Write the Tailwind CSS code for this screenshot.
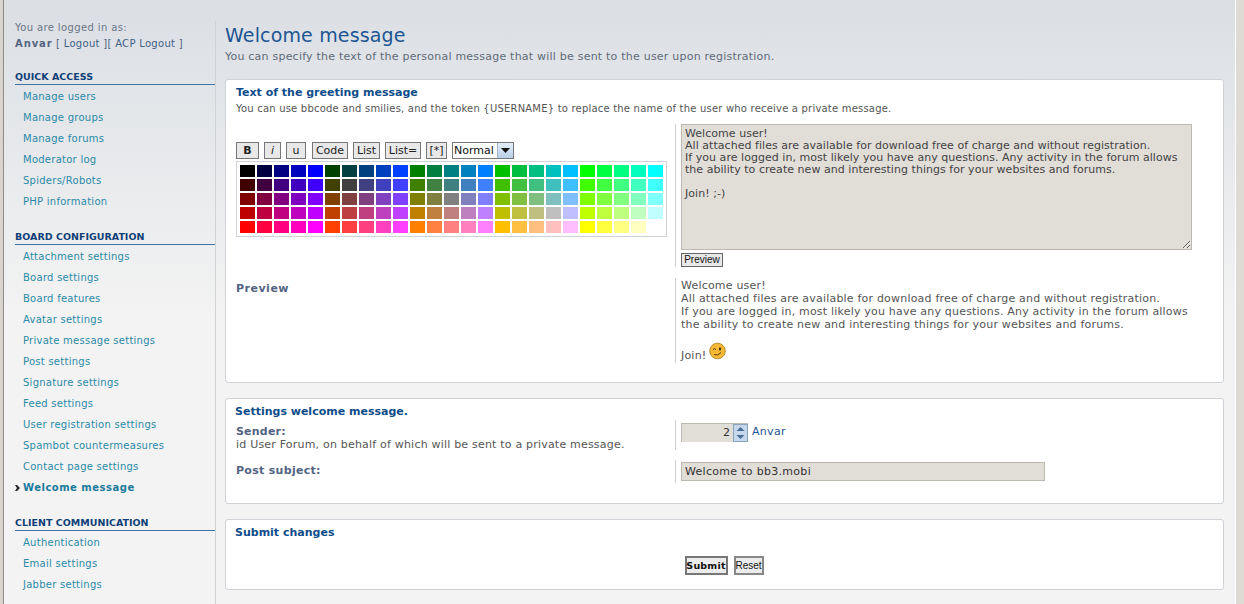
<!DOCTYPE html>
<html lang="en">
<head>
  <meta charset="UTF-8">
  <title>Welcome message</title>
  <script src="https://cdn.jsdelivr.net/npm/@tailwindcss/browser@4"></script>
  <script>
    document.addEventListener("DOMContentLoaded", () => {
      const levels = ["00", "40", "80", "BF", "FF"];
      const palette = document.getElementById("palette");
      levels.forEach((r) => {
        levels.forEach((g) => {
          levels.forEach((b) => {
            const cell = document.createElement("div");
            cell.className = "w-[15px] h-[12px]";
            cell.style.backgroundColor = `#${r}${g}${b}`;
            palette.appendChild(cell);
          });
        });
      });
    });
  </script>
</head>
<body class="h-[604px] overflow-hidden bg-[#f3f3f3] font-['DejaVu_Sans','Liberation_Sans',sans-serif] text-[11px] leading-[14px] text-[#536482]">
  <div class="flex h-[604px]">
    <div class="w-[4px] shrink-0 bg-[#d9d5ce] border-r border-[#8f8b85]"></div>

    <div class="w-[1231px] shrink-0 flex bg-gradient-to-b from-[#dbdfe4] to-[#f3f3f3] to-[52%]">
      <!-- Menu -->
      <aside class="w-[201px] shrink-0 ml-[11px] mt-[21px] border-r border-[#cfd3d6] -mr-[1px]">
        <p class="text-[10px] text-[#6a7686] tracking-[0.38px] h-[16px]">You are logged in as:</p>
        <p class="text-[10px] text-[#536482] tracking-[0.3px] h-[15px]"><b class="tracking-[0.9px]">Anvar</b> [ <a class="text-[#3f6185]">Logout</a> ][ <a class="text-[#3f6185]">ACP Logout</a> ]</p>

        <h3 class="mt-[18px] h-[14px] border-b border-[#3f75a5] box-content text-[9.5px] font-bold text-[#0f3f78] leading-[14px] mb-[1px]">QUICK ACCESS</h3>
        <ul class="pl-[8px] text-[10px] text-[#2a8aa8] tracking-[0.26px] leading-[21px]">
          <li>Manage users</li>
          <li>Manage groups</li>
          <li>Manage forums</li>
          <li>Moderator log</li>
          <li>Spiders/Robots</li>
          <li>PHP information</li>
        </ul>

        <h3 class="mt-[18px] h-[14px] border-b border-[#3f75a5] box-content text-[9.5px] font-bold text-[#0f3f78] leading-[14px] mb-[1px]">BOARD CONFIGURATION</h3>
        <ul class="pl-[8px] text-[10px] text-[#2a8aa8] tracking-[0.26px] leading-[21px]">
          <li>Attachment settings</li>
          <li>Board settings</li>
          <li>Board features</li>
          <li>Avatar settings</li>
          <li>Private message settings</li>
          <li>Post settings</li>
          <li>Signature settings</li>
          <li>Feed settings</li>
          <li>User registration settings</li>
          <li>Spambot countermeasures</li>
          <li>Contact page settings</li>
          <li class="relative font-bold text-[#1c7a9c] tracking-[0.5px]">
            <svg class="absolute -left-[8px] top-[8px]" width="5" height="6" viewBox="0 0 5 6"><path d="M0 0h2l3 3-3 3H0l2-3z" fill="#222"/></svg>
            Welcome message
          </li>
        </ul>

        <h3 class="mt-[18px] h-[14px] border-b border-[#3f75a5] box-content text-[9.5px] font-bold text-[#0f3f78] leading-[14px] mb-[1px]">CLIENT COMMUNICATION</h3>
        <ul class="pl-[8px] text-[10px] text-[#2a8aa8] tracking-[0.26px] leading-[21px]">
          <li>Authentication</li>
          <li>Email settings</li>
          <li>Jabber settings</li>
        </ul>
      </aside>

      <!-- Content -->
      <main class="w-[999px] shrink-0 ml-[10px] pt-[21px]">
        <h1 class="text-[19px] leading-[28px] text-[#1c5593] tracking-[0.15px]">Welcome message</h1>
        <p class="text-[#5f6b78] tracking-[0.22px] mt-[1px] h-[15px] leading-[14px]">You can specify the text of the personal message that will be sent to the user upon registration.</p>

        <section class="mt-[14px] h-[304px] bg-white border border-[#cfd2d6] rounded-[3px] pl-[10px] pt-[5px]">
          <h2 class="text-[11px] leading-[16px] font-bold text-[#0f4d8a]">Text of the greeting message</h2>
          <p class="mt-[1px] h-[15px] text-[10px] tracking-[0.2px] text-[#555]">You can use bbcode and smilies, and the token {USERNAME} to replace the name of the user who receive a private message.</p>

          <div class="flex mt-[7px]">
            <div class="w-[439px] shrink-0 pt-[18px]">
              <div class="flex items-center text-[#222]">
                <span class="w-[23px] h-[17px] flex items-center justify-center border border-[#777] bg-[#e8e8e8] font-bold mr-[5px]">B</span>
                <span class="w-[17px] h-[17px] flex items-center justify-center border border-[#777] bg-[#e8e8e8] italic mr-[5px]">i</span>
                <span class="w-[20px] h-[17px] flex items-center justify-center border border-[#777] bg-[#e8e8e8] mr-[6px]">u</span>
                <span class="w-[36px] h-[17px] flex items-center justify-center border border-[#777] bg-[#e8e8e8] mr-[5px]">Code</span>
                <span class="w-[27px] h-[17px] flex items-center justify-center border border-[#777] bg-[#e8e8e8] mr-[5px]">List</span>
                <span class="w-[36px] h-[17px] flex items-center justify-center border border-[#777] bg-[#e8e8e8] mr-[5px]">List=</span>
                <span class="w-[21px] h-[17px] flex items-center justify-center border border-[#777] bg-[#e8e8e8] mr-[5px]">[*]</span>
                <span class="w-[62px] h-[17px] flex items-center justify-between border border-[#777] bg-white pl-[1px] text-[#111]">
                  Normal
                  <span class="w-[16px] h-[15px] flex items-center justify-center bg-gradient-to-b from-[#e4eef8] to-[#b9d0e8] border-l border-[#9db4cc]">
                    <svg width="9" height="5" viewBox="0 0 9 5"><path d="M0 0h9L4.500 5z" fill="#111"/></svg>
                  </span>
                </span>
              </div>
              <div id="palette" class="mt-[2px] w-[431px] h-[76px] border border-[#cfd2d6] pl-[3px] pt-[3px] grid grid-cols-[repeat(25,15px)] grid-rows-[repeat(5,12px)] gap-x-[2px] gap-y-[2px]"></div>
            </div>
            <div class="border-l border-[#cfcfcf] pl-[5px] h-[143px]">
              <textarea class="block w-[511px] h-[126px] border border-[#bdb9b2] bg-[#e1ddd7] px-[3px] py-[3px] text-[11px] leading-[12px] tracking-[0.04px] text-[#444] font-['DejaVu_Sans']">Welcome user!
All attached files are available for download free of charge and without registration.
If you are logged in, most likely you have any questions. Any activity in the forum allows the ability to create new and interesting things for your websites and forums.

Join! ;-)</textarea>
              <span class="mt-[3px] flex w-[42px] h-[14px] items-center justify-center border border-[#666] bg-[#e8e8e8] text-[10px] text-[#111] font-['Liberation_Sans']">Preview</span>
            </div>
          </div>

          <div class="flex mt-[11px]">
            <div class="w-[439px] shrink-0 pt-[4px] font-bold text-[#536482] tracking-[0.5px]">Preview</div>
            <div class="border-l border-[#cfcfcf] pl-[5px] h-[85px] pt-[1px] text-[#555] tracking-[0.2px] leading-[13px]">
              <p>Welcome user!</p>
              <p>All attached files are available for download free of charge and without registration.</p>
              <p>If you are logged in, most likely you have any questions. Any activity in the forum allows</p>
              <p>the ability to create new and interesting things for your websites and forums.</p>
              <p class="mt-[11px] flex items-end gap-[3px] h-[20px]">Join!
                <svg width="17" height="18" viewBox="0 0 17 18" class="mb-[2px]">
                  <circle cx="8.500" cy="9" r="7.800" fill="#f6b935" stroke="#a8761a" stroke-width="0.800"/>
                  <path d="M4 7.500q1.500-1.500 3 0" fill="none" stroke="#5b3a08" stroke-width="1"/>
                  <ellipse cx="11" cy="7" rx="1" ry="1.800" fill="#3b2606"/>
                  <path d="M5 12.500q4 2 7-2" fill="none" stroke="#5b3a08" stroke-width="1"/>
                </svg>
              </p>
            </div>
          </div>
        </section>

        <section class="mt-[15px] h-[106px] bg-white border border-[#cfd2d6] rounded-[3px] pl-[9px] pt-[5px]">
          <h2 class="text-[11px] leading-[16px] font-bold text-[#0f4d8a]">Settings welcome message.</h2>
          <div class="flex h-[36px]">
            <div class="w-[440px] shrink-0 pl-[1px] pt-[5px] text-[#555] tracking-[0.2px]">
              <p class="font-bold text-[#536482] h-[13px] leading-[13px]">Sender:</p>
              <p class="leading-[14px]">id User Forum, on behalf of which will be sent to a private message.</p>
            </div>
            <div class="border-l border-[#cfcfcf] pl-[5px] h-[30px] pt-[3px] flex items-start">
              <span class="w-[67px] h-[19px] flex items-center justify-end bg-[#e1ddd7] border-t border-l border-[#bdb9b2] text-[#333]">2
                <span class="ml-[3px] w-[15px] h-[18px] flex flex-col justify-between bg-[#c5d8ec] border border-[#8aa3bd]">
                  <svg width="13" height="8" viewBox="0 0 13 8"><path d="M2.500 6L6.500 2l4 4z" fill="#4a6f96"/></svg>
                  <svg width="13" height="8" viewBox="0 0 13 8"><path d="M2.500 2l4 4 4-4z" fill="#4a6f96"/></svg>
                </span>
              </span>
              <a class="ml-[4px] text-[#1c5593] tracking-[0.3px] leading-[18px]">Anvar</a>
            </div>
          </div>
          <div class="flex mt-[4px]">
            <div class="w-[440px] shrink-0 pl-[1px] pt-[4px] font-bold text-[#536482] tracking-[0.3px]">Post subject:</div>
            <div class="border-l border-[#cfcfcf] pl-[5px] h-[23px] pt-[2px]">
              <div class="w-[364px] h-[19px] bg-[#e1ddd7] border border-[#bdb9b2] pl-[3px] leading-[17px] tracking-[0.3px] text-[#333]">Welcome to bb3.mobi</div>
            </div>
          </div>
        </section>

        <section class="mt-[15px] h-[71px] bg-white border border-[#cfd2d6] rounded-[3px] pl-[9px] pt-[5px]">
          <h2 class="text-[11px] leading-[15px] font-bold text-[#0f4d8a]">Submit changes</h2>
          <div class="flex justify-center gap-[6px] mt-[16px] pr-[10px]">
            <span class="w-[43px] h-[19px] flex items-center justify-center border-2 border-[#777] bg-[#ececec] text-[9.5px] font-bold text-[#111] tracking-[0.2px]">Submit</span>
            <span class="w-[30px] h-[19px] flex items-center justify-center border-2 border-[#888] bg-[#ececec] text-[10px] text-[#111] font-['Liberation_Sans']">Reset</span>
          </div>
        </section>
      </main>
    </div>

    <div class="flex-1 bg-[#dedad4] border-l border-white"></div>
  </div>
</body>
</html>
